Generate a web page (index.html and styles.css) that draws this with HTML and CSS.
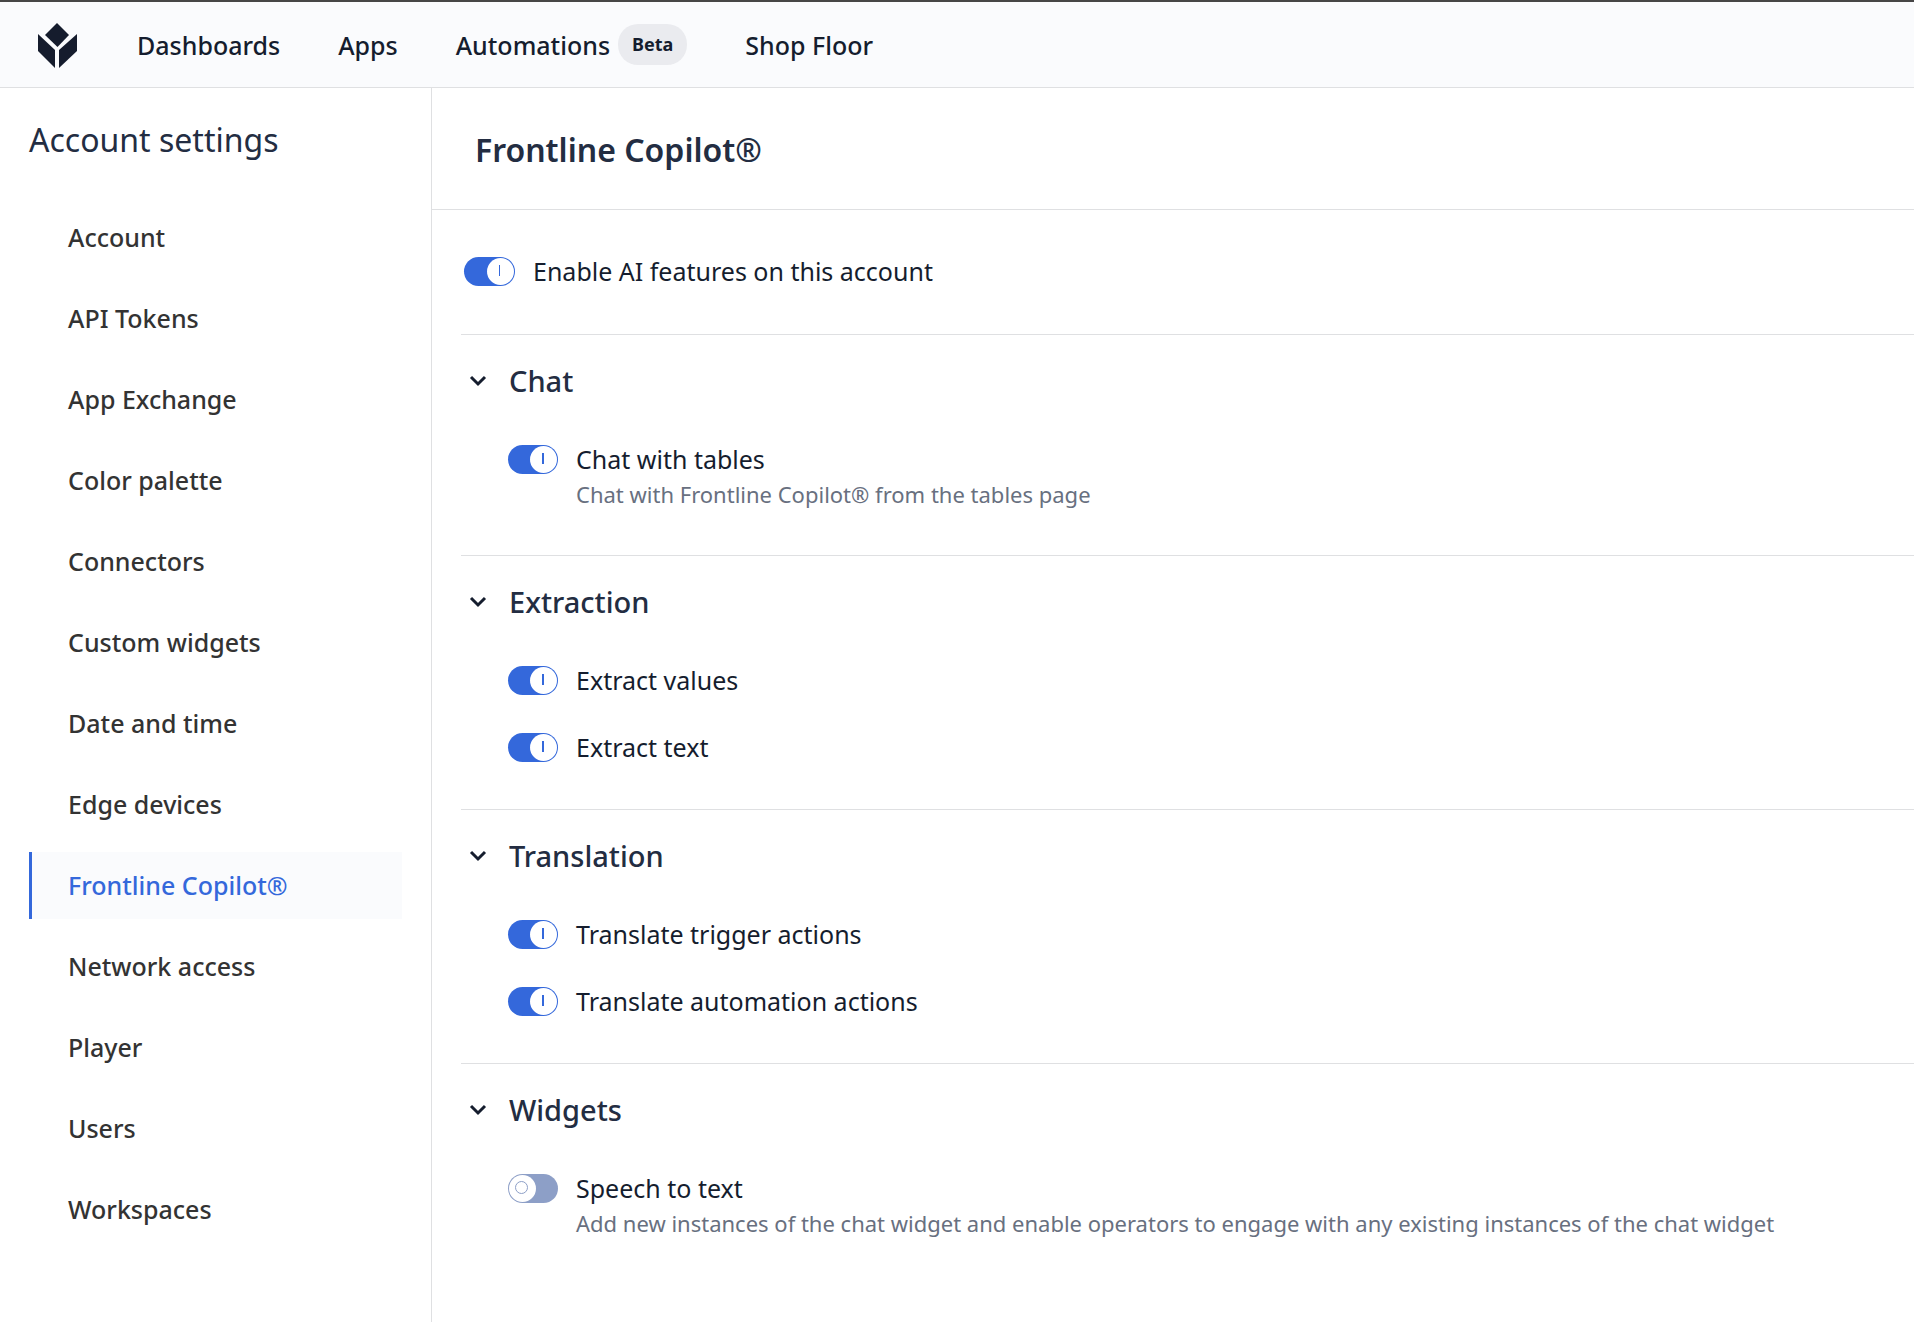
FILE: index.html
```html
<!DOCTYPE html>
<html lang="en">
<head>
<meta charset="utf-8">
<meta name="viewport" content="width=device-width, initial-scale=1">
<title>Account settings</title>
<link rel="stylesheet" href="styles.css">
</head>
<body>
<header class="topbar">
  <a class="logo" href="#" aria-label="Home">
    <svg width="39" height="46" viewBox="0 0 39 46" aria-hidden="true">
      <path d="M19 0 31 12 19.500 24 7 12Z"/>
      <path d="M0 11 17 27V45L0 28Z"/>
      <path d="M39 11V28L21 45V27Z"/>
    </svg>
  </a>
  <nav class="topnav" aria-label="Main">
    <a href="#">Dashboards</a>
    <a href="#">Apps</a>
    <a href="#">Automations <span class="badge">Beta</span></a>
    <a href="#">Shop Floor</a>
  </nav>
</header>
<div class="layout">
  <aside class="sidebar">
    <h2 class="sidebar-title">Account settings</h2>
    <nav class="menu" aria-label="Account settings">
      <a href="#">Account</a>
      <a href="#">API Tokens</a>
      <a href="#">App Exchange</a>
      <a href="#">Color palette</a>
      <a href="#">Connectors</a>
      <a href="#">Custom widgets</a>
      <a href="#">Date and time</a>
      <a href="#">Edge devices</a>
      <a href="#" class="active" aria-current="page">Frontline Copilot®</a>
      <a href="#">Network access</a>
      <a href="#">Player</a>
      <a href="#">Users</a>
      <a href="#">Workspaces</a>
    </nav>
  </aside>
  <main class="content">
    <h1 class="page-title">Frontline Copilot®</h1>
    <div class="panel">
      <div class="master">
        <input class="switch" type="checkbox" role="switch" id="ai" checked>
        <label for="ai">Enable AI features on this account</label>
      </div>
      <section class="group">
        <h2><button class="toggle" type="button" aria-expanded="true"><svg class="chevron" width="18" height="12" viewBox="0 0 18 12" aria-hidden="true"><path d="M2 2 9 9 16 2"/></svg>Chat</button></h2>
        <div class="features">
          <div class="feature">
            <input class="switch" type="checkbox" role="switch" id="tables" aria-describedby="tables-hint" checked>
            <label for="tables">Chat with tables</label>
            <p class="hint" id="tables-hint">Chat with Frontline Copilot® from the tables page</p>
          </div>
        </div>
      </section>
      <section class="group">
        <h2><button class="toggle" type="button" aria-expanded="true"><svg class="chevron" width="18" height="12" viewBox="0 0 18 12" aria-hidden="true"><path d="M2 2 9 9 16 2"/></svg>Extraction</button></h2>
        <div class="features">
          <div class="feature">
            <input class="switch" type="checkbox" role="switch" id="values" checked>
            <label for="values">Extract values</label>
          </div>
          <div class="feature">
            <input class="switch" type="checkbox" role="switch" id="text" checked>
            <label for="text">Extract text</label>
          </div>
        </div>
      </section>
      <section class="group">
        <h2><button class="toggle" type="button" aria-expanded="true"><svg class="chevron" width="18" height="12" viewBox="0 0 18 12" aria-hidden="true"><path d="M2 2 9 9 16 2"/></svg>Translation</button></h2>
        <div class="features">
          <div class="feature">
            <input class="switch" type="checkbox" role="switch" id="trigger" checked>
            <label for="trigger">Translate trigger actions</label>
          </div>
          <div class="feature">
            <input class="switch" type="checkbox" role="switch" id="automation" checked>
            <label for="automation">Translate automation actions</label>
          </div>
        </div>
      </section>
      <section class="group">
        <h2><button class="toggle" type="button" aria-expanded="true"><svg class="chevron" width="18" height="12" viewBox="0 0 18 12" aria-hidden="true"><path d="M2 2 9 9 16 2"/></svg>Widgets</button></h2>
        <div class="features">
          <div class="feature">
            <input class="switch" type="checkbox" role="switch" id="speech" aria-describedby="speech-hint">
            <label for="speech">Speech to text</label>
            <p class="hint" id="speech-hint">Add new instances of the chat widget and enable operators to engage with any existing instances of the chat widget</p>
          </div>
        </div>
      </section>
    </div>
  </main>
</div>
</body>
</html>
```
FILE: styles.css
```css
:root {
  --ink: #151d2e;
  --heading: #232d42;
  --blue: #3468db;
  --off: #8d9fc7;
  --line: #dfe0e2;
  --tint: #fafbfd;
}

* { box-sizing: border-box; }

body {
  margin: 0;
  min-height: 100vh;
  display: flex;
  flex-direction: column;
  background: #fff;
  color: var(--ink);
  font: 400 25px/36px "Noto Sans", sans-serif;
}

a { color: inherit; text-decoration: none; }
h1, h2, p { margin: 0; }

.topbar {
  display: flex;
  align-items: center;
  gap: 60px;
  height: 88px;
  padding: 0 38px;
  background: var(--tint);
  border-top: 2px solid #464646;
  border-bottom: 1px solid var(--line);
}

.logo { display: flex; padding-top: 2px; }
.logo svg { fill: #151c2d; }

.topnav { display: flex; align-items: center; gap: 58px; font-weight: 500; }
.topnav a { display: flex; align-items: center; gap: 8px; }

.badge {
  padding: 0 14px;
  border-radius: 20px;
  background: #eaebef;
  font-size: 18px;
  font-weight: 700;
  line-height: 41px;
}

.layout { display: flex; flex: 1; }

.sidebar {
  flex: none;
  width: 432px;
  padding: 28px 29px;
  border-right: 1px solid var(--line);
}

.sidebar-title {
  color: var(--heading);
  font-size: 32px;
  font-weight: 400;
  line-height: 48px;
}

.menu { display: flex; flex-direction: column; gap: 14px; margin-top: 40px; }

.menu a {
  padding: 15px 36px 16px;
  border-left: 3px solid transparent;
  color: #333;
  font-weight: 500;
}

.menu .active {
  border-color: var(--blue);
  background: var(--tint);
  color: var(--blue);
}

.content { flex: 1; min-width: 0; }

.page-title {
  padding: 38px 43px 35px;
  border-bottom: 1px solid var(--line);
  color: var(--heading);
  font-size: 32px;
  font-weight: 600;
  line-height: 48px;
}

.panel { padding-left: 29px; }

.master {
  display: flex;
  align-items: center;
  gap: 18px;
  padding: 43px 3px 45px;
}

.group { padding: 26px 0 44px; border-top: 1px solid var(--line); }
.group h2 { display: flex; }

.toggle {
  display: flex;
  align-items: center;
  gap: 22px;
  padding: 0 8px;
  border: 0;
  background: none;
  color: var(--heading);
  font: 500 29px/40px "Noto Sans", sans-serif;
}

.chevron { fill: none; stroke: var(--ink); stroke-width: 3; }

.features {
  display: flex;
  flex-direction: column;
  gap: 31px;
  margin-top: 40px;
  padding-left: 47px;
}

.feature {
  display: grid;
  grid-template-columns: auto 1fr;
  align-items: center;
  column-gap: 18px;
}

.hint {
  grid-column: 2;
  color: #68707f;
  font-size: 22px;
  line-height: 34px;
}

.switch {
  appearance: none;
  flex: none;
  display: grid;
  grid-template-columns: 27px;
  align-items: center;
  justify-content: start;
  justify-items: center;
  width: 50px;
  height: 29px;
  margin: 0;
  padding: 1px;
  border-radius: 15px;
  background: var(--off);
}

.switch::before,
.switch::after { content: ""; grid-area: 1 / 1; }

.switch::before {
  width: 27px;
  height: 27px;
  border-radius: 50%;
  background: #fff;
}

.switch::after {
  width: 11px;
  height: 11px;
  margin-bottom: 2px;
  margin-right: 2px;
  border: 1px solid var(--off);
  border-radius: 50%;
}

.switch:checked { justify-content: end; background: var(--blue); }

.switch:checked::after {
  width: 2px;
  border: 0;
  border-radius: 0;
  background: var(--blue);
}

.master .switch { width: 51px; }
.master .switch:checked::after { width: 1px; }
```
